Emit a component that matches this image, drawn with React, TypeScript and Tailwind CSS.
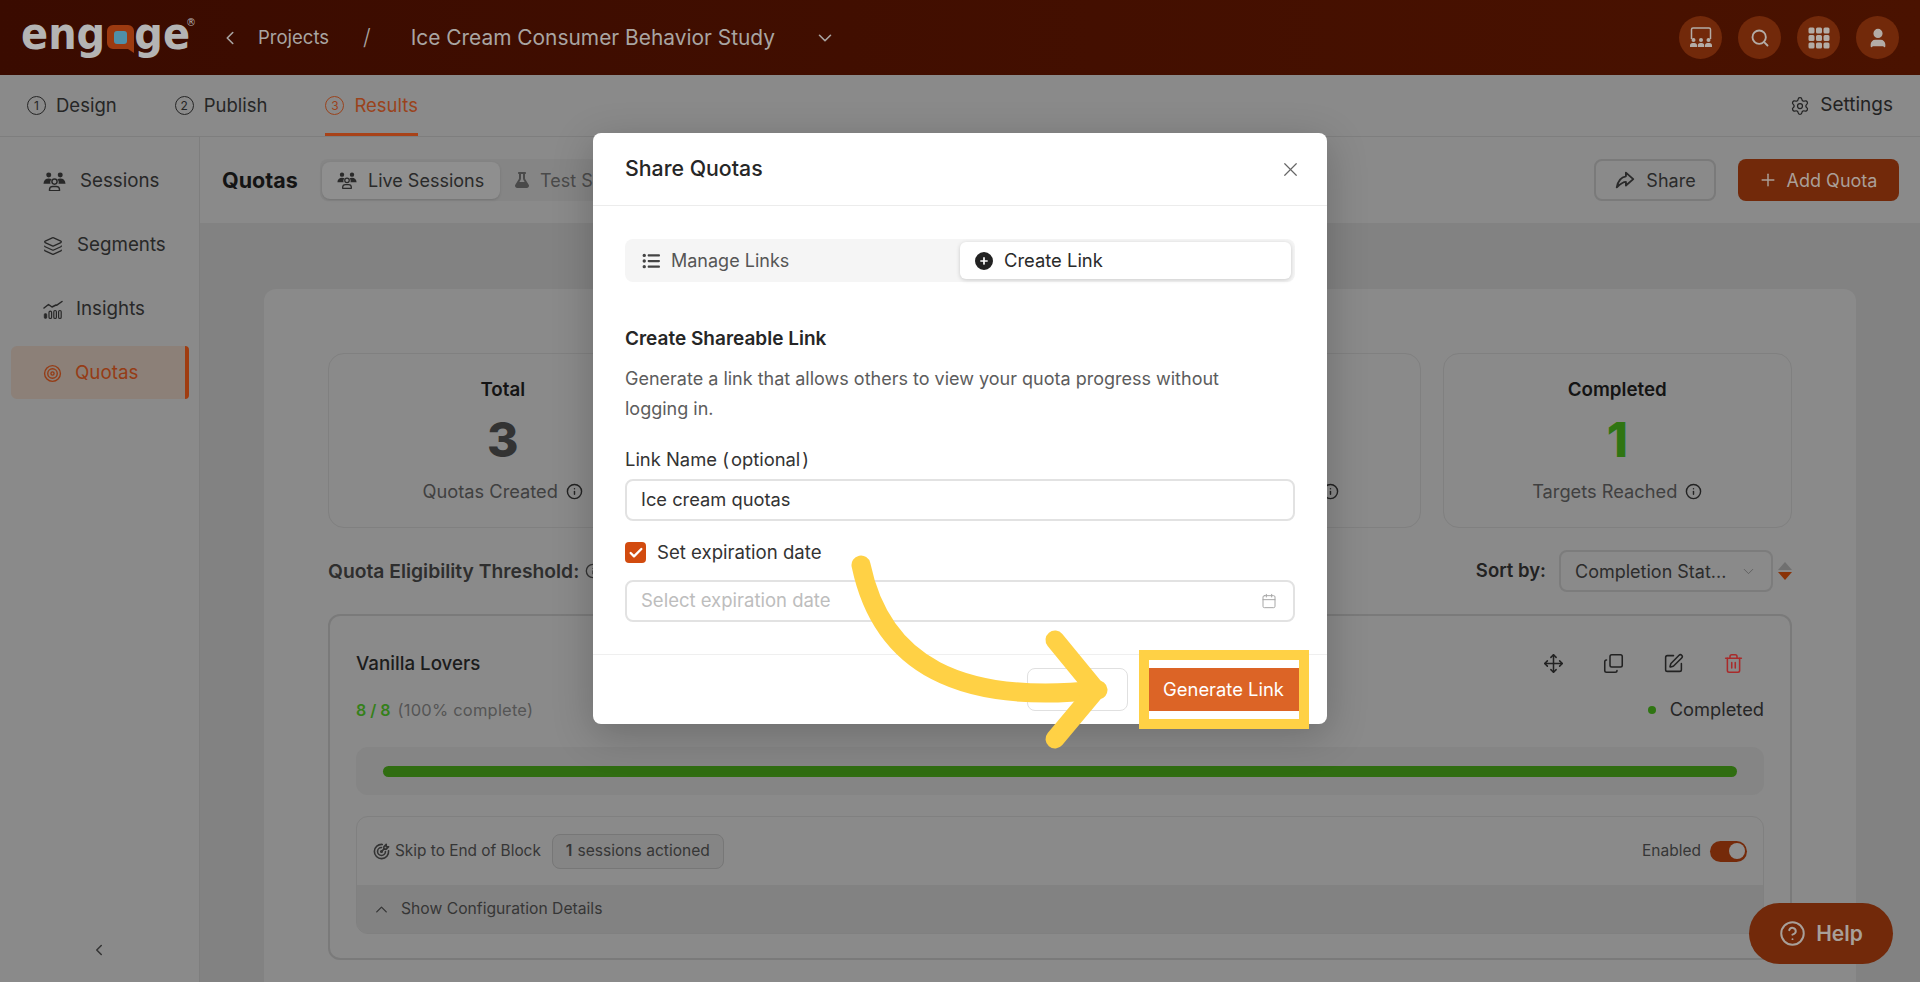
import React from "react";
import { ChevronLeft, ChevronDown, ChevronUp, Search, User, Settings, Plus, Layers, Target, Info, Move, Copy, SquarePen, Trash2, X, Check, Calendar, CircleHelp } from "lucide-react";
import { FaCirclePlus, FaFlask, FaListUl } from "react-icons/fa6";
import { TbTargetArrow, TbShare3 } from "react-icons/tb";
import { BsGrid3X3GapFill } from "react-icons/bs";

const PeopleIcon = ({ size = 24 }: { size?: number }) => (
  <svg width={size} height={size * 0.85} viewBox="0 0 24 20.4" fill="currentColor">
    <circle cx="6" cy="3.2" r="2.6" />
    <circle cx="18" cy="3.2" r="2.6" />
    <path d="M0.5 12.2C0.7 8.6 2.8 6.8 6 6.8c1.2 0 2.2.2 3 .7-1 1-1.5 2.3-1.4 3.7.1.4.2.7.3 1H0.5z" />
    <path d="M23.5 12.2C23.3 8.6 21.2 6.8 18 6.8c-1.2 0-2.2.2-3 .7 1 1 1.5 2.3 1.4 3.7-.1.4-.2.7-.3 1h8.4z" />
    <circle cx="12" cy="10" r="2.7" fill="none" stroke="currentColor" strokeWidth="1.5" />
    <path d="M6.8 19.6v-1.2c0-2 1.4-3.3 3.4-3.3h3.6c2 0 3.4 1.3 3.4 3.3v1.2z" fill="none" stroke="currentColor" strokeWidth="1.5" strokeLinejoin="round" />
  </svg>
);

const InsightsIcon = () => (
  <svg width="20" height="20" viewBox="0 0 20 20" fill="none" stroke="currentColor">
    <path d="M1 8l4.5-3.5 3.5 2.5 4-2 .5.3L19 1.5" strokeWidth="1.5" strokeLinecap="round" strokeLinejoin="round" />
    <rect x="1.2" y="13.5" width="2.6" height="5" rx="1.3" fill="currentColor" strokeWidth="0.6" />
    <rect x="6" y="11.2" width="2.6" height="7.3" rx="1.3" strokeWidth="1.2" />
    <rect x="10.8" y="10.5" width="2.6" height="8" rx="1.3" strokeWidth="1.2" />
    <rect x="15.6" y="10.5" width="2.6" height="8" rx="1.3" strokeWidth="1.2" />
  </svg>
);

const Step = ({ n, active, label }: { n: number; active?: boolean; label: string }) => (
  <div className={`h-full flex items-center gap-[10px] border-b-[3px] pt-[3px] ${active ? "border-[#a84218] text-[#9a431c]" : "border-transparent text-[#262626]"}`}>
    <span className={`w-[19px] h-[19px] rounded-full border flex items-center justify-center text-[12px] leading-none ${active ? "border-[#9a431c]" : "border-[#262626]"}`}>{n}</span>
    <span className="text-[18.5px]">{label}</span>
  </div>
);

const SideItem = ({ icon, label, active, gapClass }: { icon: React.ReactNode; label: string; active?: boolean; gapClass: string }) => (
  <div className={`h-[53px] mb-[11px] pt-[2px] flex items-center pl-[32px] rounded-l-md rounded-r-sm text-[18.75px] ${gapClass} ${active ? "bg-[#8c8078] text-[#953c16] border-r-4 border-[#a03c10]" : "text-[#282828]"}`}>
    {icon}
    <span>{label}</span>
  </div>
);

const Circle = ({ children }: { children: React.ReactNode }) => (
  <div className="w-[43px] h-[43px] rounded-full bg-[#72290a] flex items-center justify-center text-[#b3aca6]">{children}</div>
);

const Stat = ({ title, value, sub, green }: { title: string; value: string; sub: string; green?: boolean }) => (
  <div className="h-[175px] rounded-2xl border border-[#808080] bg-[#8a8a8a] flex flex-col items-center pt-[23px]">
    <div className="text-[18.75px] font-semibold text-[#141414] leading-[26px]">{title}</div>
    <div className={`text-[48px] font-extrabold leading-[60px] mt-[7px] ${green ? "text-[#2f7512]" : "text-[#333]"}`}>{value}</div>
    <div className="flex items-center gap-[8px] text-[18.25px] text-[#404040] mt-[8px] leading-[26px]">
      <span>{sub}</span>
      <Info size={17} strokeWidth={2} className="text-[#222]" />
    </div>
  </div>
);

const CoveredStat = ({ icon }: { icon?: boolean }) => (
  <div className="h-[175px] rounded-2xl border border-[#808080] bg-[#8a8a8a] flex justify-end items-start pr-[81px] pt-[129px]">
    {icon && <Info size={17} strokeWidth={2} className="text-[#222]" />}
  </div>
);

const Presenter = () => (
  <svg width="24" height="21" viewBox="0 0 24 21" fill="currentColor">
    <path d="M2.5 12V2.5A1.5 1.5 0 0 1 4 1h16a1.5 1.5 0 0 1 1.5 1.5V12" fill="none" stroke="currentColor" strokeWidth="1.5" />
    <circle cx="4.5" cy="13" r="2" /><circle cx="12" cy="13" r="2" /><circle cx="19.5" cy="13" r="2" />
    <path d="M1 20v-1.5A2.5 2.5 0 0 1 3.5 16h2A2.5 2.5 0 0 1 8 18.5V20zM8.8 20v-1.5a2.5 2.5 0 0 1 2.5-2.5h1.4a2.5 2.5 0 0 1 2.5 2.5V20zM16 20v-1.5a2.5 2.5 0 0 1 2.5-2.5h2a2.5 2.5 0 0 1 2.5 2.5V20z" />
  </svg>
);

const Logo = () => (
  <div className="relative flex items-center h-[37px] w-[171px] text-[#b4b4b4] text-[40px] font-bold leading-none" style={{ fontFamily: "'DejaVu Sans', sans-serif" }}>
    <span className="inline-block scale-y-[1.1] mb-[7px] origin-center">eng</span>
    <svg width="27" height="28" viewBox="0 0 27 28" className="ml-[2px] shrink-0 mb-[-2px]">
      <path d="M6 0h15a6 6 0 0 1 6 6v22l-6-4H6a6 6 0 0 1-6-6V6a6 6 0 0 1 6-6z" fill="#9c3a10" />
      <rect x="7" y="6" width="13" height="13" rx="3" fill="#4f8fa8" />
    </svg>
    <span className="inline-block scale-y-[1.1] mb-[7px] origin-center">ge</span>
    <span className="absolute right-[-4px] top-[-1px] text-[10px] font-normal">®</span>
  </div>
);

export default function App() {
  return (
    <div className="relative w-full h-[982px] overflow-hidden bg-[#828282] flex flex-col" style={{ fontFamily: "Inter, 'Noto Sans', sans-serif" }}>
      {/* top bar */}
      <header className="h-[75px] shrink-0 flex items-center pl-[21px] pr-[21px] bg-gradient-to-r from-[#3a0b00] to-[#4a1200] text-[#a9a5a2]">
        <Logo />
        <ChevronLeft size={22} strokeWidth={1.75} className="ml-[27px]" />
        <span className="ml-[17px] text-[18.5px] w-[72px] whitespace-nowrap">Projects</span>
        <span className="ml-[33px] text-[22px] font-light">/</span>
        <span className="ml-[40px] text-[20.9px] w-[373px] whitespace-nowrap">Ice Cream Consumer Behavior Study</span>
        <ChevronDown size={22} strokeWidth={1.75} className="ml-[30px]" />
        <div className="ml-auto flex gap-[16px]">
          <Circle><Presenter /></Circle>
          <Circle><Search size={20} strokeWidth={2.25} /></Circle>
          <Circle><BsGrid3X3GapFill size={24} /></Circle>
          <Circle><User size={22} fill="currentColor" /></Circle>
        </div>
      </header>

      {/* steps bar */}
      <nav className="h-[62px] shrink-0 flex items-center pl-[27px] pr-[27px] border-b border-[#7e7e7e] bg-[#8a8a8a]">
        <div className="h-full flex gap-[58px]">
          <Step n={1} label="Design" />
          <Step n={2} label="Publish" />
          <Step n={3} label="Results" active />
        </div>
        <div className="ml-auto flex items-center gap-[10px] text-[19px] text-[#232323]">
          <Settings size={20} strokeWidth={1.5} />
          <span>Settings</span>
        </div>
      </nav>

      <div className="flex-1 flex min-h-0">
        {/* sidebar */}
        <aside className="relative w-[200px] shrink-0 border-r border-[#7e7e7e] bg-[#8a8a8a] pt-[17px] pl-[11px] pr-[10px]">
          <SideItem gapClass="gap-[14px]" icon={<PeopleIcon size={23} />} label="Sessions" />
          <SideItem gapClass="gap-[14px]" icon={<Layers size={20} strokeWidth={1.5} />} label="Segments" />
          <SideItem gapClass="gap-[13px]" icon={<InsightsIcon />} label="Insights" />
          <SideItem gapClass="gap-[13px]" icon={<Target size={19} strokeWidth={1.75} />} label="Quotas" active />
          <ChevronLeft size={18} className="absolute left-[90px] top-[804px] text-[#333]" />
        </aside>

        {/* main */}
        <main className="flex-1 min-w-0 flex flex-col">
          <div className="h-[86px] shrink-0 flex items-center bg-[#8a8a8a] pl-[22px] pr-[21px]">
            <h1 className="text-[21.5px] font-bold text-[#141414] w-[98px]">Quotas</h1>
            <div className="flex items-center h-[42px] px-[2px] rounded-lg bg-[#858585]">
              <div className="h-[37px] w-[178px] rounded-lg bg-[#8f8f8f] flex items-center gap-[11px] pl-[15px] text-[18px] text-[#2a2a2a] shadow-sm">
                <PeopleIcon size={20} />
                <span>Live Sessions</span>
              </div>
              <div className="h-[37px] flex items-center gap-[10px] pl-[14px] pr-[14px] text-[18px] text-[#4a4a4a]">
                <FaFlask size={16} />
                <span>Test Sessions</span>
              </div>
            </div>
            <button className="ml-auto h-[42px] w-[122px] rounded-lg border-2 border-[#7a7a7a] flex items-center justify-center gap-[10px] text-[18px] text-[#2a2a2a]">
              <TbShare3 size={22} strokeWidth={2} />
              <span>Share</span>
            </button>
            <button className="ml-[22px] h-[42px] w-[161px] rounded-lg bg-[#72290a] flex items-center justify-center gap-[9px] text-[18px] text-[#aa9f98] pr-[2px]">
              <Plus size={20} strokeWidth={1.75} />
              <span>Add Quota</span>
            </button>
          </div>

          <div className="flex-1 min-h-0 pl-[64px] pr-[64px] pt-[66px]">
            <section className="h-[900px] rounded-t-xl bg-[#8a8a8a] px-[64px] pt-[64px]">
              <div className="grid grid-cols-4 gap-[22px]">
                <Stat title="Total" value="3" sub="Quotas Created" />
                <CoveredStat />
                <CoveredStat icon />
                <Stat title="Completed" value="1" sub="Targets Reached" green />
              </div>

              <div className="h-[42px] mt-[22px] flex items-center text-[18px]">
                <span className="font-semibold text-[19.3px] text-[#2e2e2e]">Quota Eligibility Threshold:</span>
                <Info size={16} className="ml-[6px] text-[#333]" />
                <span className="ml-auto font-semibold text-[18.5px] text-[#222]">Sort by:</span>
                <div className="ml-[13px] h-[42px] w-[214px] rounded-lg border-2 border-[#7c7c7c] flex items-center pl-[14px] pr-[14px] text-[#2c2c2c]">
                  <span className="flex-1 whitespace-nowrap">Completion Stat...</span>
                  <ChevronDown size={17} strokeWidth={1.25} className="text-[#5c5c5c]" />
                </div>
                <div className="ml-[5px] flex flex-col gap-[2px] w-[14px]">
                  <div className="w-0 h-0 border-x-[7px] border-x-transparent border-b-[8px] border-b-[#707070]" />
                  <div className="w-0 h-0 border-x-[7px] border-x-transparent border-t-[8px] border-t-[#8a3308]" />
                </div>
              </div>

              <article className="mt-[22px] h-[346px] rounded-xl border-2 border-[#7a7a7a] px-[26px] pt-[34px]">
                <div className="flex items-center h-[28px]">
                  <span className="text-[18.75px] font-medium text-[#1c1c1c]">Vanilla Lovers</span>
                  <div className="ml-auto flex gap-[39px] pr-[20px] text-[#222] mt-[-2px]">
                    <Move size={21} strokeWidth={1.75} />
                    <Copy size={21} strokeWidth={1.75} className="-scale-y-100" />
                    <SquarePen size={21} strokeWidth={1.75} />
                    <Trash2 size={21} strokeWidth={1.75} className="text-[#a92a2a]" />
                  </div>
                </div>
                <div className="flex items-center mt-[19px] h-[26px]">
                  <span className="text-[16px] font-semibold text-[#35801a]">8 / 8</span>
                  <span className="ml-[7px] text-[16.5px] text-[#555] tracking-[0.2px]">(100% complete)</span>
                  <span className="ml-auto w-[8px] h-[8px] rounded-full bg-[#2f7512]" />
                  <span className="ml-[14px] text-[18.3px] text-[#262626]">Completed</span>
                </div>
                <div className="mt-[24px] h-[48px] rounded-xl bg-[#858585] px-[27px] flex items-center">
                  <div className="w-full h-[11px] rounded-full bg-[#306d11]" />
                </div>
                <div className="mt-[21px] h-[118px] rounded-xl border border-[#808080] overflow-hidden flex flex-col">
                  <div className="h-[68px] flex items-center pl-[15px] pr-[16px]">
                    <TbTargetArrow size={19} className="text-[#333]" />
                    <span className="ml-[4px] text-[15.4px] text-[#363636]">Skip to End of Block</span>
                    <div className="ml-[11px] h-[35px] w-[172px] justify-center rounded-lg border border-[#777] bg-[#858585] flex items-center text-[15.6px] text-[#363636] gap-[5px]">
                      <b className="font-semibold">1</b>
                      <span>sessions actioned</span>
                    </div>
                    <span className="ml-auto text-[15.5px] text-[#363636]">Enabled</span>
                    <div className="ml-[9px] w-[37px] h-[21px] rounded-full bg-[#752a0a] flex items-center justify-end pr-[2px]">
                      <div className="w-[16px] h-[16px] rounded-full bg-[#8f8f8f]" />
                    </div>
                  </div>
                  <div className="flex-1 bg-[#828282] flex items-center pl-[15px] gap-[10px] text-[15.7px] text-[#363636]">
                    <ChevronUp size={19} strokeWidth={1.75} />
                    <span>Show Configuration Details</span>
                  </div>
                </div>
              </article>
            </section>
          </div>
        </main>
      </div>

      {/* help */}
      <button className="absolute left-[1749px] top-[903px] w-[144px] h-[61px] rounded-full bg-[#72290a] flex items-center justify-center gap-[10px] text-[21px] font-semibold text-[#a8a09a]">
        <CircleHelp size={27} strokeWidth={1.75} />
        <span>Help</span>
      </button>

      {/* modal */}
      <div className="absolute inset-0 flex justify-center pt-[133px]">
        <div className="relative w-[734px] h-[591px] rounded-lg bg-white shadow-[0_10px_40px_rgba(0,0,0,0.22)] flex flex-col">
          <div className="h-[73px] shrink-0 flex items-center px-[32px] border-b border-[#ececec]">
            <h2 className="text-[21.3px] font-medium text-[#262626]">Share Quotas</h2>
            <X size={23} strokeWidth={1.25} className="ml-auto mr-[-7px] text-[#666]" />
          </div>
          <div className="flex-1 px-[32px] pt-[33px]">
            <div className="h-[43px] rounded-lg bg-[#f5f5f5] grid grid-cols-[335px_1fr] items-center pr-[4px]">
              <div className="flex items-center gap-[11px] pl-[17px] text-[18px] text-[#555]">
                <FaListUl size={18} className="text-[#444]" />
                <span>Manage Links</span>
              </div>
              <div className="h-[37px] rounded-md bg-white shadow-[0_1px_4px_rgba(0,0,0,0.18)] flex items-center gap-[11px] pl-[15px] text-[18.4px] text-[#2a2a2a]">
                <FaCirclePlus size={18} className="text-[#222]" />
                <span>Create Link</span>
              </div>
            </div>
            <h3 className="mt-[45px] text-[19px] font-semibold leading-[24px] text-[#262626]">Create Shareable Link</h3>
            <p className="mt-[13px] w-[640px] text-[18px] leading-[30px] text-[#5c5c5c]">Generate a link that allows others to view your quota progress without logging in.</p>
            <label className="block mt-[20px] text-[18.4px] leading-[30px] text-[#333]">Link Name <span className="tracking-[2px]">(</span>optional<span className="ml-[2px]">)</span></label>
            <div className="mt-[5px] h-[42px] rounded-lg border-2 border-[#e2e2e2] flex items-center pl-[14px] text-[18.3px] text-[#333]">Ice cream quotas</div>
            <div className="mt-[21px] flex items-center h-[21px]">
              <span className="w-[21px] h-[21px] rounded bg-[#d24b0f] flex items-center justify-center">
                <Check size={16} strokeWidth={3.5} className="text-white" />
              </span>
              <span className="ml-[11px] text-[18.6px] text-[#333]">Set expiration date</span>
            </div>
            <div className="mt-[17px] h-[42px] rounded-lg border-2 border-[#e2e2e2] flex items-center pl-[14px] pr-[16px] text-[18.5px] text-[#bdbdbd]">
              <span className="flex-1">Select expiration date</span>
              <Calendar size={16} strokeWidth={1.5} className="text-[#a8a8a8]" />
            </div>
          </div>
          <div className="h-[70px] shrink-0 border-t border-[#efefef] flex items-start justify-end pt-[13px] pr-[28px] gap-[20px]">
            <button className="h-[43px] w-[101px] rounded-lg border border-[#e0e0e0]" aria-label="Cancel" />
            <button className="h-[43px] w-[151px] bg-[#dc6426] text-white text-[18.4px]">Generate Link</button>
          </div>
          {/* highlight frame */}
          <div className="absolute left-[546px] top-[517px] w-[170px] h-[79px] border-[10px] border-[#ffd145]" />
        </div>
      </div>

      {/* annotation arrow */}
      <svg className="absolute inset-0 pointer-events-none" width="1920" height="982" fill="none" stroke="#ffd145" strokeWidth="19" strokeLinecap="round" strokeLinejoin="round">
        <path d="M861 565 C882 665 960 705 1098 690" />
        <path d="M1055 640 L1096 690 L1055 739" />
      </svg>
    </div>
  );
}
